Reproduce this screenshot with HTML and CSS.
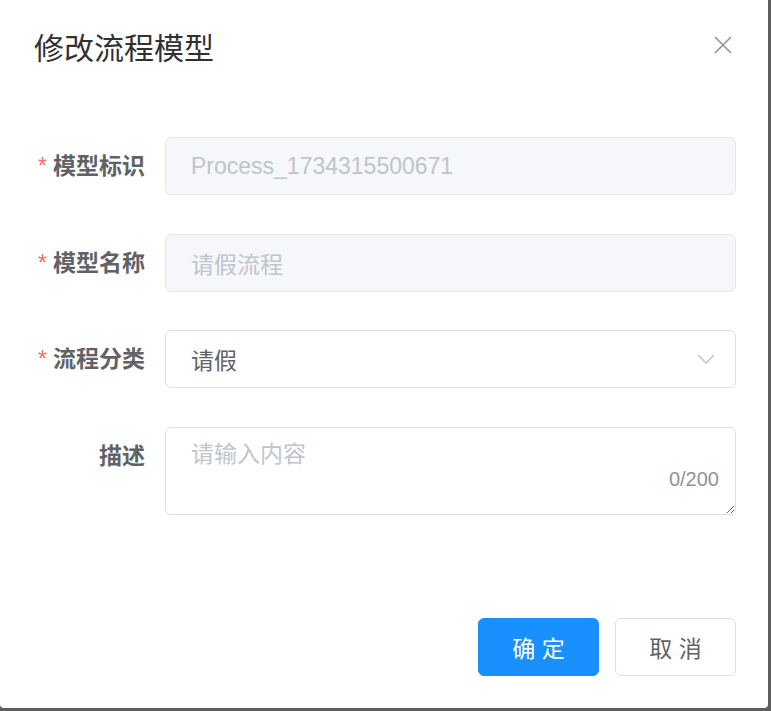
FILE: index.html
```html
<!DOCTYPE html>
<html lang="zh">
<head>
    <meta charset="UTF-8">
    <meta name="viewport" content="width=device-width, initial-scale=1.0">
    <title>修改流程模型</title>
    <link rel="stylesheet" href="styles.css">
</head>
<body>
    <div class="dialog">
        <div class="dialog-header">
            <span class="dialog-title">修改流程模型</span>
            <button class="dialog-close" aria-label="关闭">
                <svg width="18" height="18" viewBox="0 0 18 18">
                    <path d="M1 1 L17 17 M17 1 L1 17" stroke="#909399" stroke-width="1.6" fill="none"/>
                </svg>
            </button>
        </div>
        <div class="dialog-body">
            <form class="form">
                <div class="form-item">
                    <label class="form-label is-required">模型标识</label>
                    <div class="form-content">
                        <input class="input" type="text" value="Process_1734315500671" disabled>
                    </div>
                </div>
                <div class="form-item">
                    <label class="form-label is-required">模型名称</label>
                    <div class="form-content">
                        <input class="input" type="text" value="请假流程" disabled>
                    </div>
                </div>
                <div class="form-item">
                    <label class="form-label is-required">流程分类</label>
                    <div class="form-content">
                        <div class="select">
                            <span>请假</span>
                            <svg class="select-arrow" width="18" height="10" viewBox="0 0 18 10">
                                <path d="M1 1 L9 9 L17 1" stroke="#c0c4cc" stroke-width="1.5" fill="none"/>
                            </svg>
                        </div>
                    </div>
                </div>
                <div class="form-item">
                    <label class="form-label">描述</label>
                    <div class="form-content textarea-wrap">
                        <textarea class="textarea" placeholder="请输入内容"></textarea>
                        <span class="textarea-count">0/200</span>
                    </div>
                </div>
            </form>
        </div>
        <div class="dialog-footer">
            <button class="btn btn-primary">确 定</button>
            <button class="btn">取 消</button>
        </div>
    </div>
</body>
</html>
```

FILE: styles.css
```css
body {
    margin: 0;
    padding: 0;
    background-color: #5e5e5e;
    font-family: "Liberation Sans", "Noto Sans CJK SC", sans-serif;
    color: #303133;
}

.dialog {
    width: 768px;
    height: 708px;
    background: #fff;
    border-radius: 0 0 4px 4px;
    display: flex;
    flex-direction: column;
    box-sizing: border-box;
}

.dialog-header {
    display: flex;
    justify-content: space-between;
    align-items: flex-start;
    padding: 29px 36px 0 34px;
    height: 40px;
}

.dialog-title {
    font-size: 30px;
    line-height: 40px;
    color: #303133;
}

.dialog-close {
    border: none;
    background: none;
    padding: 0;
    margin-top: 7px;
    width: 18px;
    height: 18px;
    cursor: pointer;
    display: flex;
}

.dialog-body {
    padding: 68px 32px 0 0;
}

.form {
    display: flex;
    flex-direction: column;
    gap: 38.7px;
}

.form-item {
    display: flex;
}

.form-label {
    width: 145px;
    padding-right: 20px;
    text-align: right;
    font-size: 23px;
    font-weight: bold;
    line-height: 58px;
    color: #606266;
    flex-shrink: 0;
}

.form-label.is-required::before {
    content: "*";
    color: #f56c6c;
    margin-right: 6px;
    font-weight: normal;
}

.form-content {
    flex: 1;
    position: relative;
}

.input,
.select,
.textarea {
    width: 100%;
    box-sizing: border-box;
    font-family: inherit;
    font-size: 23px;
    border: 1px solid #dcdfe6;
    border-radius: 6px;
    padding: 0 25px;
    color: #606266;
    background: #fff;
    outline: none;
}

.input {
    height: 58px;
}

.input:disabled {
    background-color: #f5f7fa;
    border-color: #e4e7ed;
    color: #c0c4cc;
    -webkit-text-fill-color: #c0c4cc;
}

.select {
    height: 58px;
    display: flex;
    align-items: center;
    justify-content: space-between;
    padding-right: 20px;
}

.select-arrow {
    flex-shrink: 0;
}

.textarea {
    display: block;
    height: 88px;
    padding-top: 9px;
    line-height: 1.5;
    resize: vertical;
}

.textarea::placeholder {
    color: #c0c4cc;
}

.textarea-count {
    position: absolute;
    right: 17px;
    bottom: 26px;
    font-size: 20px;
    line-height: 1;
    color: #909399;
}

.dialog-footer {
    margin-top: auto;
    display: flex;
    justify-content: flex-end;
    gap: 16px;
    padding: 0 32px 32px 0;
}

.btn {
    width: 121px;
    height: 58px;
    border: 1px solid #dcdfe6;
    border-radius: 6px;
    background: #fff;
    color: #606266;
    font-family: "Liberation Sans", "Noto Sans CJK SC", sans-serif;
    font-size: 23px;
    cursor: pointer;
}

.btn-primary {
    background: #1890ff;
    border-color: #1890ff;
    color: #fff;
}
```
